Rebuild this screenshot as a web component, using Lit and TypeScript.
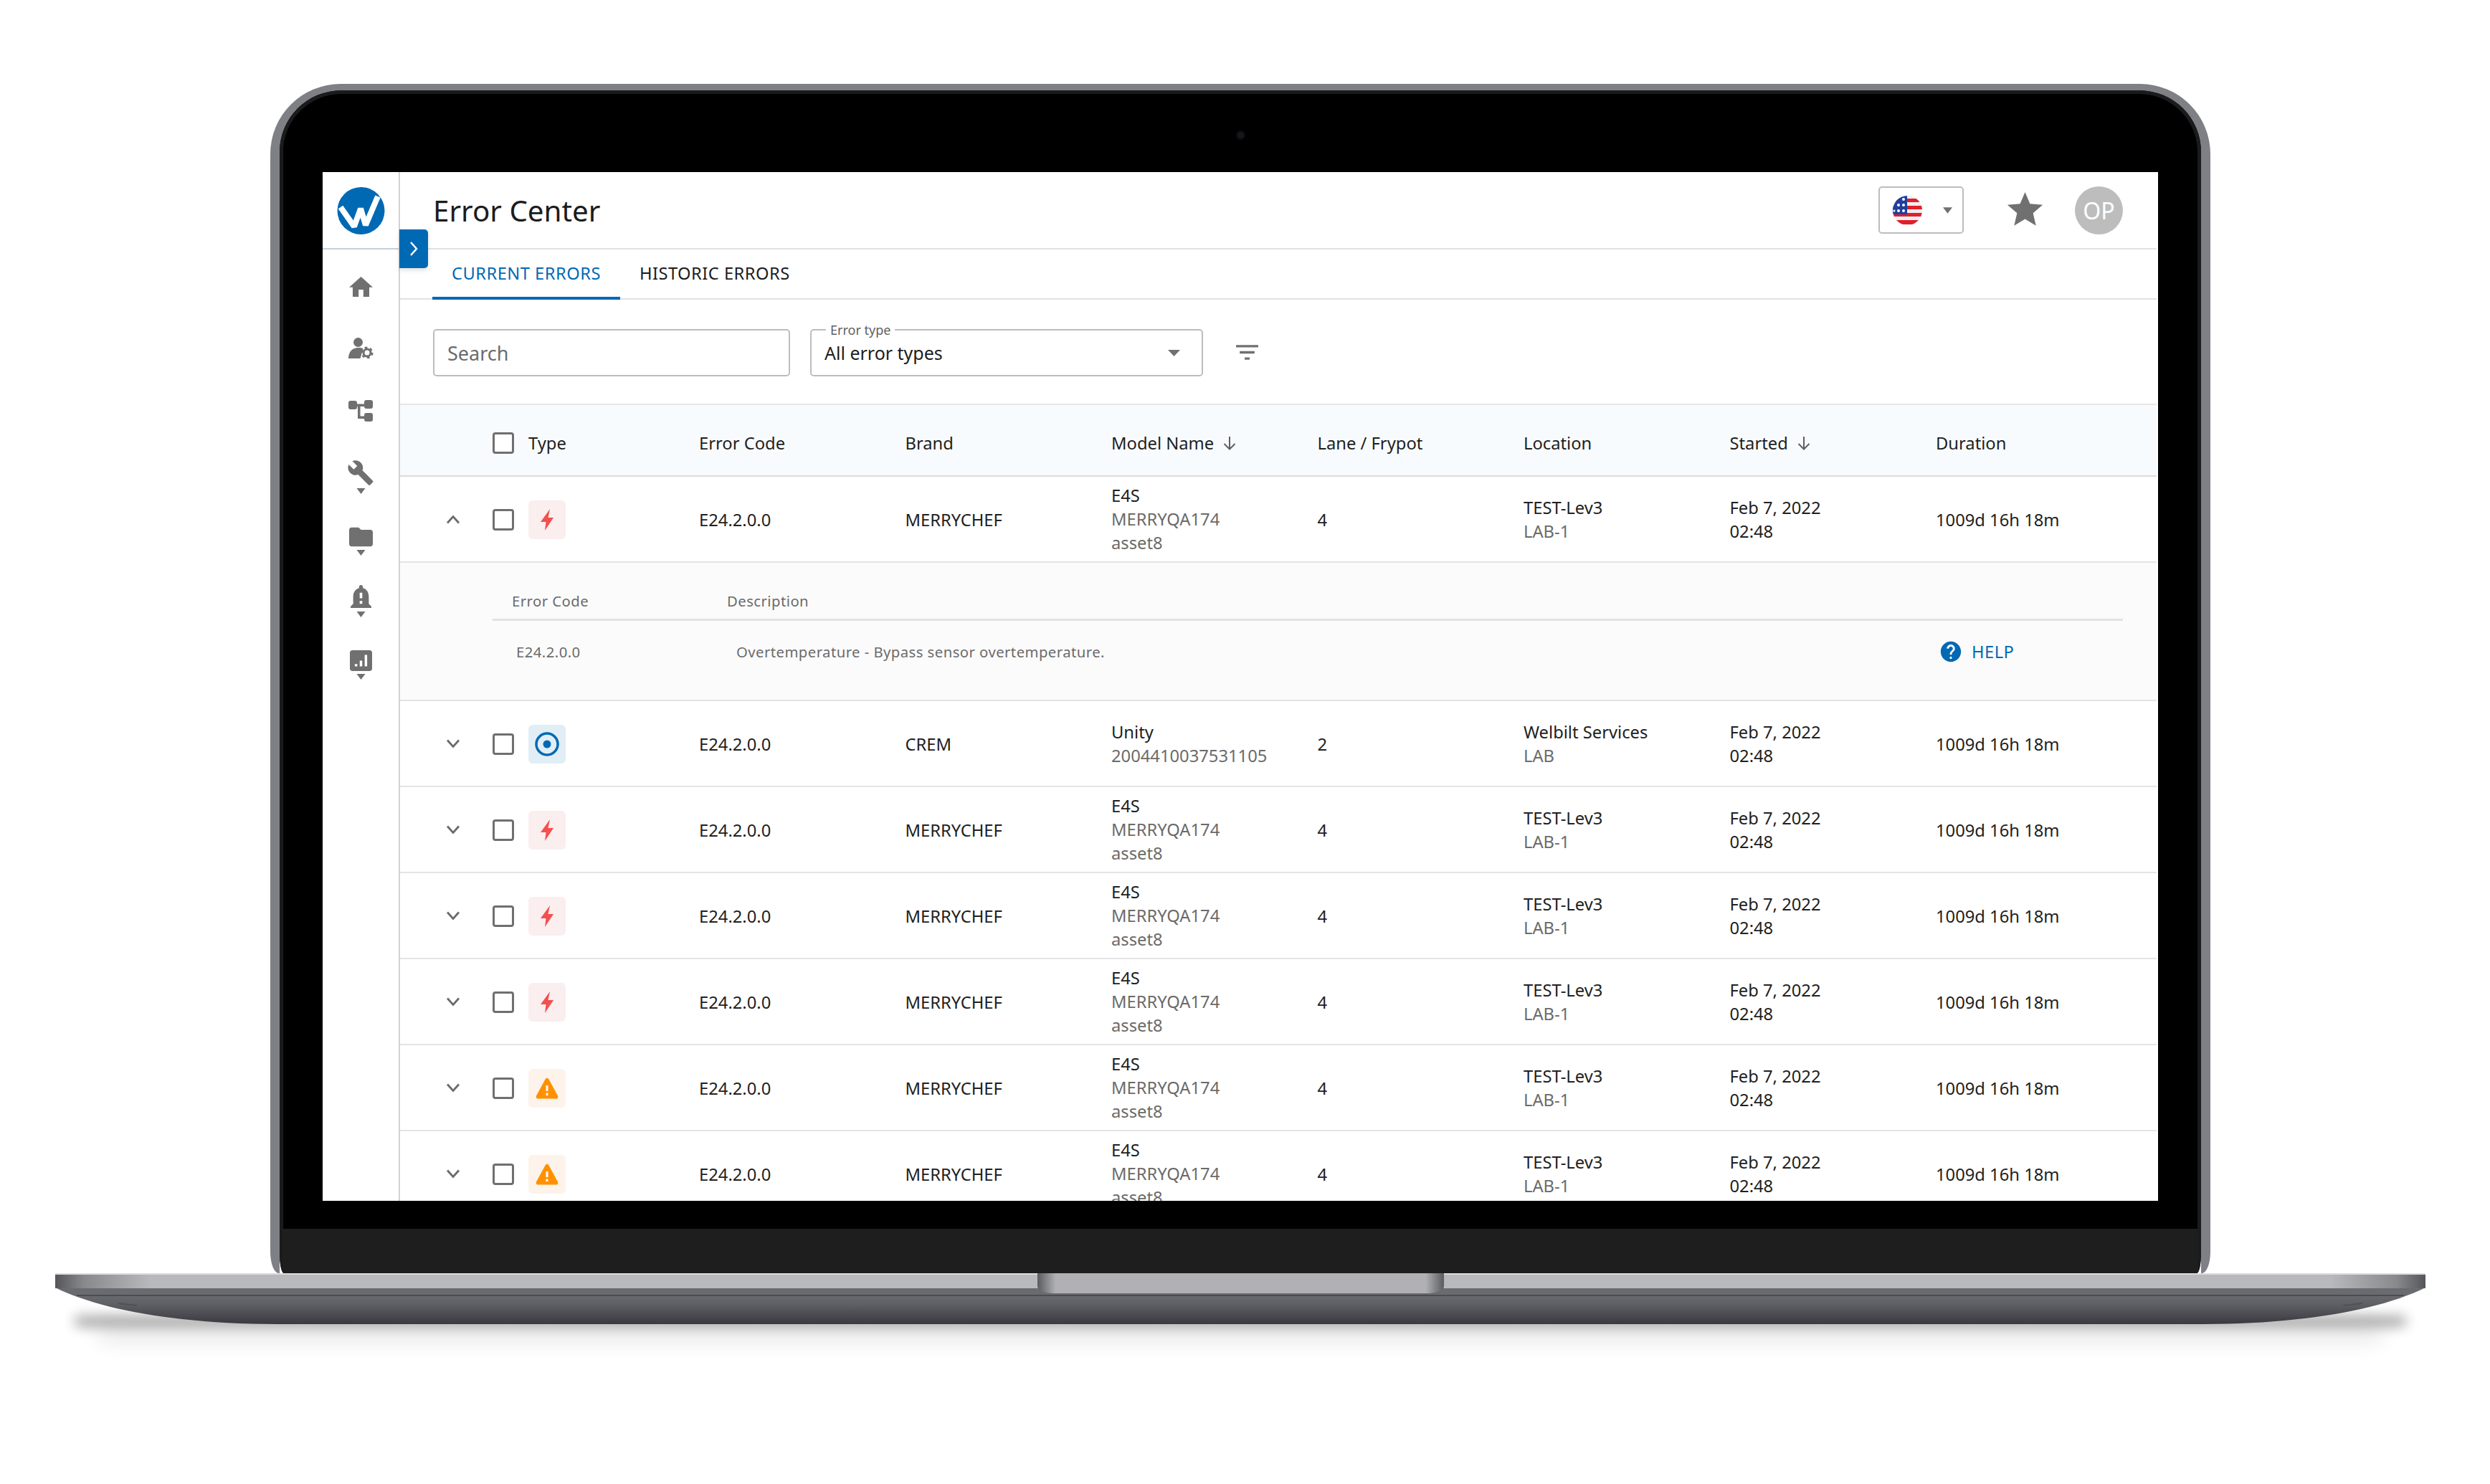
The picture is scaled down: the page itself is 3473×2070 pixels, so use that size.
import { LitElement, html, css, svg } from "lit";
import { customElement } from "lit/decorators.js";

type Kind = "bolt" | "ring" | "warn";
interface Row { kind: Kind; brand: string; model: string[]; lane: string; loc: string[]; open?: boolean; }

const e4s = ["E4S", "MERRYQA174", "asset8"];
const test = ["TEST-Lev3", "LAB-1"];
const merry = (kind: Kind, open = false): Row => ({ kind, brand: "MERRYCHEF", model: e4s, lane: "4", loc: test, open });
const rows: Row[] = [
  merry("bolt", true),
  { kind: "ring", brand: "CREM", model: ["Unity", "2004410037531105"], lane: "2", loc: ["Welbilt Services", "LAB"] },
  merry("bolt"), merry("bolt"), merry("bolt"), merry("warn"), merry("warn"),
];

const caret = html`<svg class="caret" viewBox="0 0 13 8"><path d="M0.5 0H12.5L6.5 8Z"/></svg>`;

const navItems = [
  { pitch: 85, hasCaret: false, icon: html`<svg width="33" height="28" viewBox="2 3 20 17"><path d="M10 20v-6h4v6h5v-8h3L12 3 2 12h3v8z"/></svg>` },
  { pitch: 87, hasCaret: false, icon: html`<svg width="35" height="29" viewBox="0 0 35 29"><circle cx="13.5" cy="6.5" r="6.5"/><path d="M0 29c0-10 6-15 14-15 3 0 5 .5 6.5 1.2L16.500 29z"/><circle cx="26" cy="21" r="5" fill="none" stroke="#707070" stroke-width="3"/><circle cx="26" cy="21" r="7.300" fill="none" stroke="#707070" stroke-width="2.500" stroke-dasharray="3.700 4"/></svg>` },
  { pitch: 84, hasCaret: false, icon: html`<svg width="34" height="30" viewBox="0 0 34 30"><rect width="12" height="12" y="1" rx="3"/><rect x="22" width="12" height="12" rx="3"/><rect x="22" y="18" width="12" height="12" rx="3"/><path d="M12 5.500h10v3.500h-5.500v13.500H22V26H13V9h-1z"/></svg>` },
  { pitch: 93, hasCaret: true, icon: html`<svg width="36" height="35" viewBox="1 1 22 22"><path d="M22.700 19l-9.100-9.100c.9-2.300.4-5-1.500-6.900-2-2-5-2.400-7.400-1.300L9 6 6 9 1.600 4.700C.4 7.100.9 10.100 2.900 12.100c1.900 1.900 4.600 2.400 6.900 1.500l9.100 9.100c.4.4 1 .4 1.400 0l2.300-2.300c.5-.4.5-1.100.1-1.400z"/></svg>` },
  { pitch: 81, hasCaret: true, icon: html`<svg width="33" height="28" viewBox="2 4 20 16"><path d="M10 4H4c-1.100 0-2 .9-2 2v12c0 1.100.9 2 2 2h16c1.100 0 2-.9 2-2V8c0-1.100-.9-2-2-2h-8l-2-2z"/></svg>` },
  { pitch: 91, hasCaret: true, icon: html`<svg width="29" height="33" viewBox="4 2.500 16 17"  preserveAspectRatio="none"><path d="M18 16v-5c0-3.070-1.640-5.640-4.500-6.320V4c0-.83-.67-1.500-1.500-1.500s-1.500.67-1.500 1.500v.68C7.630 5.360 6 7.920 6 11v5l-2 2v1h16v-1l-2-2zm-5 0h-2v-2h2v2zm0-4h-2V8h2v4z"/></svg>` },
  { pitch: 90, hasCaret: true, icon: html`<svg width="31" height="29" viewBox="3 3 18 18" preserveAspectRatio="none"><path d="M19 3H5c-1.100 0-2 .9-2 2v14c0 1.100.9 2 2 2h14c1.100 0 2-.9 2-2V5c0-1.100-.9-2-2-2zM9 17H7v-2h2v2zm4 0h-2v-5h2v5zm4 0h-2V7h2v10z"/></svg>` },
];

const chevron = (up: boolean) => html`<svg class="chev" viewBox="0 0 20 13"><path d=${up ? "M2 11.500L10 2.500L18 11.500" : "M2 1.500L10 10.500L18 1.500"}/></svg>`;

const badge = (k: Kind) => {
  if (k === "bolt") return html`<span class="badge bolt"><svg width="18" height="30" viewBox="0 0 18 30"><path fill="#f44f4f" d="M13 0L0 18H7.500L6 30L18 12H10.500Z"/></svg></span>`;
  if (k === "ring") return html`<span class="badge ring"><svg width="34" height="34" viewBox="0 0 34 34"><circle cx="17" cy="17" r="15" fill="none" stroke="#0069b4" stroke-width="3.500"/><circle cx="17" cy="17" r="5.500" fill="#0069b4"/></svg></span>`;
  return html`<span class="badge warn"><svg width="32" height="30" viewBox="0 0 32 30"><path fill="#ff9100" d="M13.500 2.500c1.200-2.300 3.800-2.300 5 0l12.500 23c1 2 -.2 4-2.500 4h-25c-2.300 0-3.500-2-2.500-4z"/><rect x="14.500" y="11" width="3" height="8" fill="#fff"/><rect x="14.500" y="21.500" width="3" height="3.500" fill="#fff"/></svg></span>`;
};

const sortArrow = html`<svg class="sort" viewBox="0 0 20 20"><path d="M10 1V18.500M2.500 11L10 18.500L17.500 11"/></svg>`;

const baseArt = svg`
  <defs>
    <linearGradient id="band" x1="0" x2="1" y1="0" y2="0">
      <stop offset="0" stop-color="#55565a"/><stop offset=".012" stop-color="#88898d"/><stop offset=".04" stop-color="#b8b8bd"/>
      <stop offset=".96" stop-color="#b8b8bd"/><stop offset=".988" stop-color="#88898d"/><stop offset="1" stop-color="#55565a"/>
    </linearGradient>
    <linearGradient id="under" x1="0" x2="0" y1="0" y2="1">
      <stop offset="0" stop-color="#6a6b70"/><stop offset=".2" stop-color="#6a6b70"/><stop offset=".45" stop-color="#5f6065"/><stop offset="1" stop-color="#39393f"/>
    </linearGradient>
    <linearGradient id="notch" x1="0" x2="1" y1="0" y2="0">
      <stop offset="0" stop-color="#5a5b5f"/><stop offset=".045" stop-color="#b0b0b5"/><stop offset=".955" stop-color="#b0b0b5"/><stop offset="1" stop-color="#5a5b5f"/>
    </linearGradient>
    <filter id="soft" x="-5%" y="-200%" width="110%" height="500%"><feGaussianBlur stdDeviation="9"/></filter>
    <filter id="softer" x="-5%" y="-300%" width="110%" height="700%"><feGaussianBlur stdDeviation="15"/></filter>
  </defs>
  <rect x="60" y="72" width="3186" height="22" fill="#000" opacity=".1" filter="url(#softer)"/>
  <rect x="28" y="60" width="3250" height="14" fill="#000" opacity=".38" filter="url(#soft)"/>
  <path d="M0 20C60 50 170 71 310 71H2996C3136 71 3246 50 3306 20Z" fill="url(#under)"/>
  <rect y="30" x="30" width="3246" height="2" fill="#4b4c51"/>
  <rect width="3306" height="21" fill="url(#band)"/>
  <rect width="3306" height="2" fill="#dcdce0"/>
  <path d="M1370 0H1937V18C1937 24 1925 28 1915 28H1392C1382 28 1370 24 1370 18Z" fill="url(#notch)"/>
  <rect x="1097" y="52" width="30" height="3" rx="1.500" fill="#505156"/>
  <rect x="2195" y="52" width="30" height="3" rx="1.500" fill="#505156"/>
  <path d="M88 42l26 3" stroke="#505156" stroke-width="2" fill="none"/>
  <path d="M3218 42l-26 3" stroke="#505156" stroke-width="2" fill="none"/>
`;

@customElement("app-root")
export class AppRoot extends LitElement {
  static styles = css`
    :host { display: block; width: 3473px; height: 2070px; background: #fff; font-family: "Noto Sans", "Open Sans", sans-serif; color: #212121; overflow: hidden; }
    * { box-sizing: border-box; }
    .stage { display: flex; flex-direction: column; padding-top: 117px; }
    .lid { margin-left: 377px; width: 2706px; height: 1659px; border-style: solid; border-color: #7f8085; border-width: 9px 13px 0 13px; border-radius: 98px 98px 12px 12px / 98px 98px 30px 30px; }
    .bezel { position: relative; height: 100%; background: #000; border-radius: 86px 86px 6px 6px / 86px 86px 28px 28px; box-shadow: inset 0 0 0 5px #1b1b1d; display: flex; flex-direction: column; align-items: center; padding-top: 114px; overflow: hidden; }
    .camera { position: absolute; left: 1336px; top: 58px; width: 9px; height: 9px; border-radius: 50%; background: #15171c; box-shadow: 0 0 0 2px #0b0c0e; }
    .screen { position: relative; width: 2560px; height: 1435px; flex: none; background: #fff; display: flex; overflow: hidden; }
    .chin { margin-top: 39px; width: calc(100% - 8px); flex: 1; background: #1e1e1e; }
    .base { margin-left: 77px; width: 3306px; height: 71px; display: block; overflow: visible; }

    .side { width: 108px; flex: none; border-right: 2px solid #d2d2d2; display: flex; flex-direction: column; }
    .logo { height: 108px; flex: none; border-bottom: 2px solid #c6d0dc; display: flex; justify-content: center; padding-top: 21px; }
    .nav { display: flex; flex-direction: column; align-items: center; padding-top: 38px; }
    .nav-item { display: flex; flex-direction: column; align-items: center; flex: none; }
    .nav-item svg { fill: #707070; display: block; }
    .caret { width: 13px; height: 8px; margin-top: 4px; fill: #707070; display: block; }
    .toggle { position: absolute; left: 107px; top: 80px; width: 40px; height: 54px; background: #0069b4; border-radius: 0 5px 5px 0; display: flex; align-items: center; justify-content: center; box-shadow: 0 3px 6px rgba(0,0,0,.12); }
    .toggle svg { width: 12px; height: 22px; fill: none; stroke: #fff; stroke-width: 2.500; }

    .main { flex: 1; min-width: 0; padding-right: 2px; display: flex; flex-direction: column; }
    .top { height: 108px; flex: none; border-bottom: 2px solid #e2e2e2; display: flex; align-items: center; padding: 0 47px 0 46px; }
    h1 { margin: 0; font-size: 40.300px; font-weight: 400; color: #1c1c1c; flex: 1; }
    .lang { width: 119px; height: 66px; border: 2px solid #bdbdbd; border-radius: 5px; display: flex; align-items: center; padding-left: 18px; gap: 29px; }
    .lang .drop { width: 13px; height: 9px; fill: #707070; }
    .star { width: 59px; height: 59px; margin: -2px 40px 0 56px; fill: #707070; }
    .avatar { width: 67px; height: 67px; border-radius: 50%; background: #bdbdbd; color: #fff; font-size: 32px; display: flex; align-items: center; justify-content: center; }

    .tabs { height: 70px; flex: none; border-bottom: 2px solid #e2e2e2; display: flex; padding-left: 45px; }
    .tab { padding: 0 27px; height: 70px; font-size: 23.660px; letter-spacing: .5px; display: flex; align-items: center; padding-bottom: 4px; color: #1c1c1c; }
    .tab.on { color: #0069b4; border-bottom: 4px solid #0069b4; padding-bottom: 0; }

    .filters { height: 145px; flex: none; display: flex; align-items: flex-start; padding: 41px 0 0 46px; }
    .field { height: 66px; border: 2px solid #bdbdbd; border-radius: 5px; display: flex; align-items: center; }
    .search { width: 498px; padding-left: 18px; color: #6b6b6b; font-size: 27px; }
    .select { position: relative; width: 548px; margin-left: 28px; padding: 0 30px 0 18px; justify-content: space-between; color: #1c1c1c; font-size: 25px; }
    .select label { position: absolute; left: 20px; top: -13px; background: #fff; padding: 0 6px; font-size: 18px; line-height: 24px; color: #5f5f5f; }
    .select svg { width: 17px; height: 9px; fill: #707070; }
    .filter { width: 31px; height: 31px; margin: 17px 0 0 46px; fill: #707070; }

    .cols { display: grid; grid-template-columns: 129px 50px 238px repeat(6, 287.500px) 1fr; align-items: center; font-size: 23.750px; }
    .head { height: 102px; flex: none; background: #f8fbfd; border-top: 2px solid #e6e6e6; border-bottom: 2px solid #dcdcdc; padding-top: 8px; color: #1f1f1f; }
    .sortable { display: flex; align-items: center; gap: 12px; }
    .sort { width: 20px; height: 20px; fill: none; stroke: #5f5f5f; stroke-width: 2; }
    .check { display: block; width: 30px; height: 30px; border: 3.500px solid #6f6f6f; border-radius: 4px; background: #fff; }
    .row { height: 120px; flex: none; border-bottom: 2px solid #e4e4e4; padding-top: 1px; }
    .chev { display: block; width: 20px; height: 13px; margin-left: 64px; fill: none; stroke: #6a6a6a; stroke-width: 2.800; }
    .badge { display: flex; width: 52px; height: 54px; border-radius: 6px; align-items: center; justify-content: center; }
    .badge.bolt { background: #faeeee; }
    .badge.ring { background: #e1eef6; }
    .badge.warn { background: #fdf3ea; }
    .lines { line-height: 33px; }
    .lines div:not(:first-child) { color: #6b6b6b; }
    .lines.dark div { color: #212121; }

    .detail { height: 193px; flex: none; background: #fbfbfb; border-bottom: 2px solid #e4e4e4; padding: 0 47px 0 129px; font-size: 20.300px; letter-spacing: .45px; color: #6b6b6b; }
    .dhead { height: 81px; border-bottom: 3px solid #e2e2e2; display: flex; align-items: flex-end; padding: 0 0 11px 27px; }
    .dhead span:first-child { width: 300px; }
    .dbody { display: flex; align-items: center; height: 86px; padding-left: 33px; }
    .dbody .code { width: 307px; }
    .dbody .desc { flex: 1; }
    .help { display: flex; align-items: center; gap: 15px; width: 254px; color: #0069b4; font-size: 23.660px; letter-spacing: .5px; }
    .help svg { width: 34px; height: 34px; margin: 0 -3px; fill: #0069b4; }
  `;

  private rowTpl(r: Row) {
    return html`
      <div class="cols row">
        ${chevron(!!r.open)}
        <span class="check"></span>
        ${badge(r.kind)}
        <div>E24.2.0.0</div>
        <div>${r.brand}</div>
        <div class="lines">${r.model.map((m) => html`<div>${m}</div>`)}</div>
        <div>${r.lane}</div>
        <div class="lines">${r.loc.map((m) => html`<div>${m}</div>`)}</div>
        <div class="lines dark"><div>Feb 7, 2022</div><div>02:48</div></div>
        <div>1009d 16h 18m</div>
      </div>
      ${r.open ? html`
        <div class="detail">
          <div class="dhead"><span>Error Code</span><span>Description</span></div>
          <div class="dbody">
            <span class="code">E24.2.0.0</span>
            <span class="desc">Overtemperature - Bypass sensor overtemperature.</span>
            <span class="help"><svg viewBox="0 0 24 24"><path d="M12 2C6.480 2 2 6.480 2 12s4.480 10 10 10 10-4.480 10-10S17.520 2 12 2zm1 17h-2v-2h2v2zm2.070-7.750l-.9.92C13.450 12.900 13 13.500 13 15h-2v-.5c0-1.100.45-2.100 1.170-2.830l1.240-1.260c.37-.36.59-.86.59-1.410 0-1.100-.9-2-2-2s-2 .9-2 2H8c0-2.210 1.790-4 4-4s4 1.790 4 4c0 .88-.36 1.680-.93 2.250z"/></svg>HELP</span>
          </div>
        </div>` : ""}
    `;
  }

  render() {
    return html`
      <div class="stage">
        <div class="lid">
          <div class="bezel">
            <span class="camera"></span>
            <div class="screen">
              <aside class="side">
                <div class="logo">
                  <svg width="67" height="66" viewBox="0 0 67 66">
                    <circle cx="33.500" cy="33" r="33" fill="#0069b4"/>
                    <path d="M5 28L24 55L33 30L40 53L57 13" fill="none" stroke="#fff" stroke-width="8" stroke-linejoin="bevel"/>
                  </svg>
                </div>
                <nav class="nav">
                  ${navItems.map((n) => html`<div class="nav-item" style="height:${n.pitch}px">${n.icon}${n.hasCaret ? caret : ""}</div>`)}
                </nav>
              </aside>
              <span class="toggle"><svg viewBox="0 0 12 22"><path d="M2 2L10 11L2 20"/></svg></span>
              <main class="main">
                <header class="top">
                  <h1>Error Center</h1>
                  <div class="lang">
                    <svg width="41" height="41" viewBox="0 0 41 41">
                      <defs><clipPath id="fc"><circle cx="20.500" cy="20.500" r="20.500"/></clipPath></defs>
                      <g clip-path="url(#fc)">
                        <rect width="41" height="41" fill="#eeeeee"/>
                        <rect y="4" width="41" height="5" fill="#e01e2c"/><rect y="14" width="41" height="5" fill="#e01e2c"/>
                        <rect y="24" width="41" height="5" fill="#e01e2c"/><rect y="34" width="41" height="6" fill="#e01e2c"/>
                        <rect width="20" height="26" fill="#1f3f9e"/>
                        <g fill="#fff"><circle cx="15" cy="5" r="2"/><circle cx="8" cy="13" r="2"/><circle cx="15" cy="13" r="2"/><circle cx="8" cy="21" r="2"/><circle cx="15" cy="21" r="2"/><circle cx="2" cy="21" r="1.500"/></g>
                      </g>
                    </svg>
                    <svg class="drop" viewBox="0 0 12 8"><path d="M0 0H12L6 8Z"/></svg>
                  </div>
                  <svg class="star" viewBox="0 0 24 24"><path d="M12 17.270L18.180 21l-1.640-7.030L22 9.240l-7.190-.61L12 2 9.190 8.630 2 9.240l5.460 4.730L5.820 21z"/></svg>
                  <div class="avatar">OP</div>
                </header>
                <div class="tabs">
                  <div class="tab on">CURRENT ERRORS</div>
                  <div class="tab">HISTORIC ERRORS</div>
                </div>
                <div class="filters">
                  <div class="field search">Search</div>
                  <div class="field select"><label>Error type</label><span>All error types</span><svg viewBox="0 0 17 9"><path d="M0 0H17L8.500 9Z"/></svg></div>
                  <svg class="filter" viewBox="3 3 18 18"><path d="M10 18h4v-2h-4v2zM3 6v2h18V6H3zm3 7h12v-2H6v2z" /></svg>
                </div>
                <div class="cols head">
                  <span></span>
                  <span class="check"></span>
                  <div>Type</div>
                  <div>Error Code</div>
                  <div>Brand</div>
                  <div class="sortable">Model Name ${sortArrow}</div>
                  <div>Lane / Frypot</div>
                  <div>Location</div>
                  <div class="sortable">Started ${sortArrow}</div>
                  <div>Duration</div>
                </div>
                ${rows.map((r) => this.rowTpl(r))}
              </main>
            </div>
            <div class="chin"></div>
          </div>
        </div>
        <svg class="base" viewBox="0 0 3306 71">${baseArt}</svg>
      </div>
    `;
  }
}
